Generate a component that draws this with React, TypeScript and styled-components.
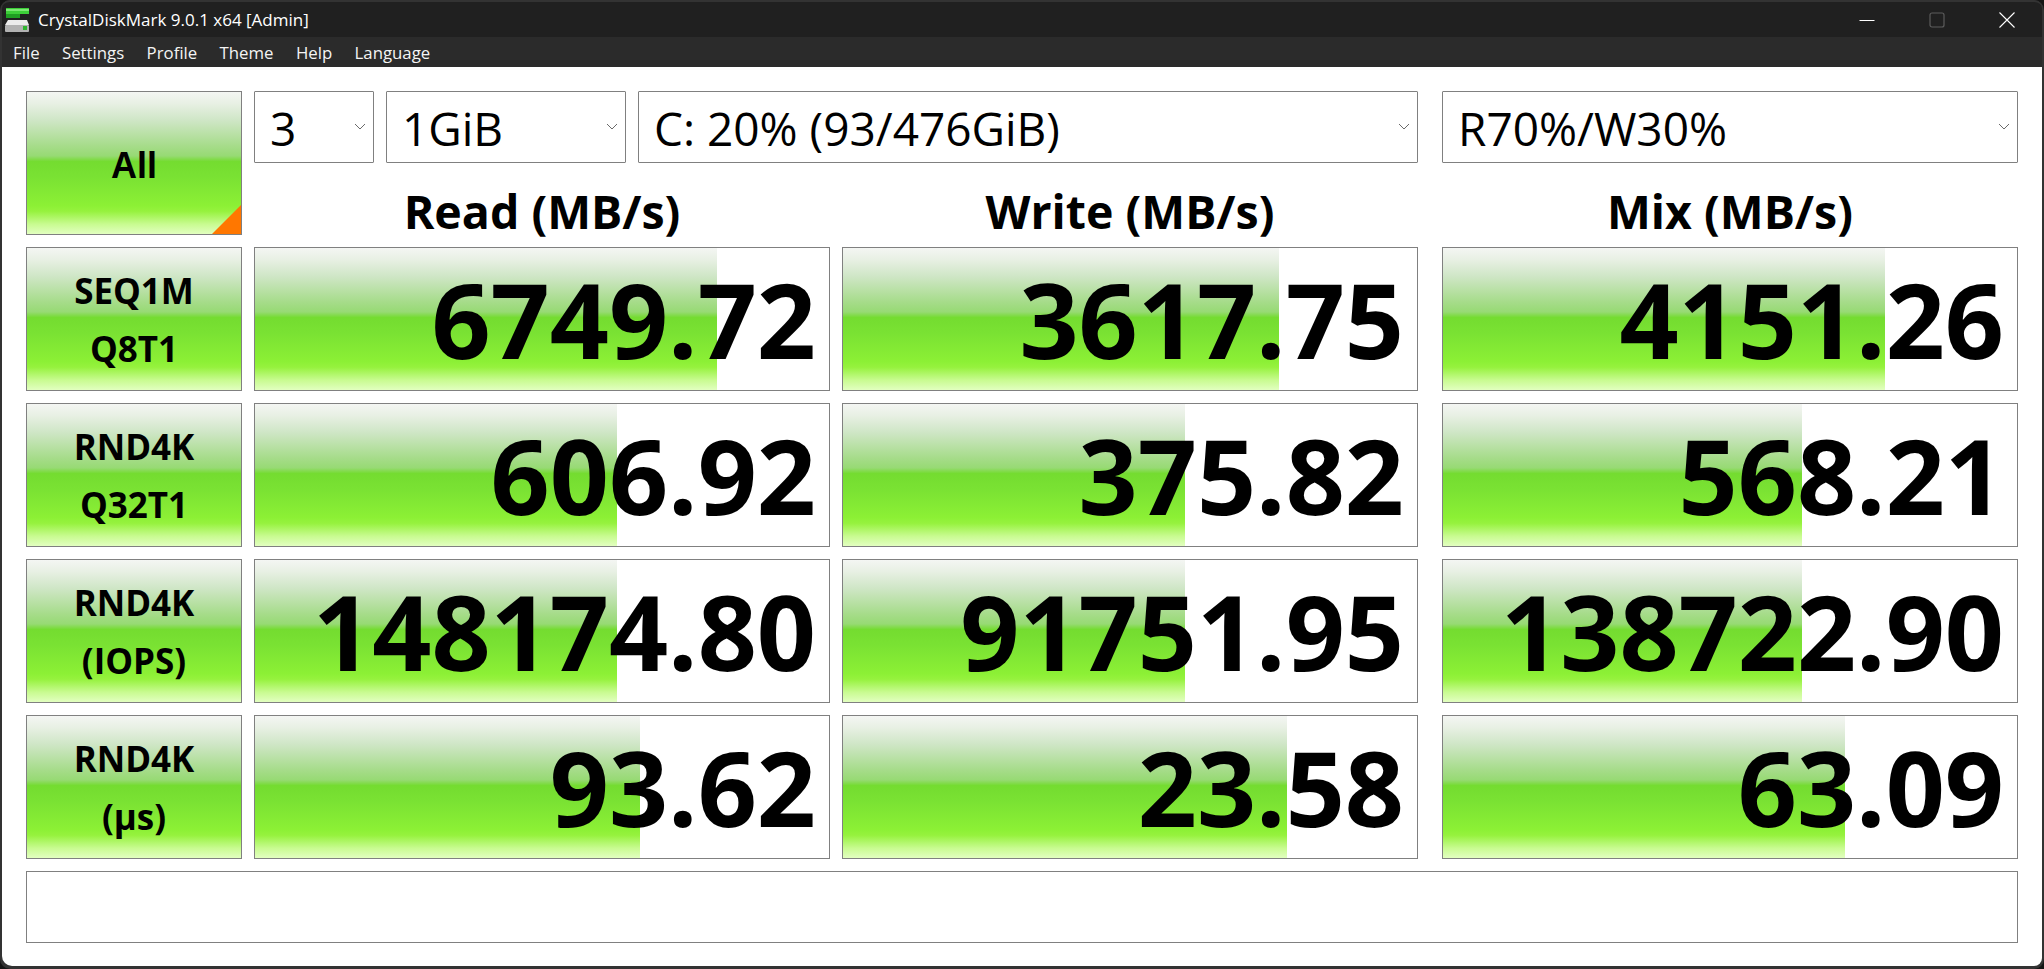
import React from "react";
import styled, { createGlobalStyle } from "styled-components";

const FONT = `"Open Sans", "Noto Sans", "Liberation Sans", sans-serif`;

const GlobalStyle = createGlobalStyle`
  html, body {
    margin: 0;
    height: 100%;
    background: #141414;
  }
  #root {
    height: 100%;
  }
`;

const menus = ["File", "Settings", "Profile", "Theme", "Help", "Language"];

const rows = [
  {
    top: "SEQ1M",
    bottom: "Q8T1",
    cells: [
      { value: "6749.72", fill: 462 },
      { value: "3617.75", fill: 436 },
      { value: "4151.26", fill: 442 },
    ],
  },
  {
    top: "RND4K",
    bottom: "Q32T1",
    cells: [
      { value: "606.92", fill: 362 },
      { value: "375.82", fill: 342 },
      { value: "568.21", fill: 359 },
    ],
  },
  {
    top: "RND4K",
    bottom: "(IOPS)",
    cells: [
      { value: "148174.80", fill: 362 },
      { value: "91751.95", fill: 342 },
      { value: "138722.90", fill: 359 },
    ],
  },
  {
    top: "RND4K",
    bottom: "(μs)",
    cells: [
      { value: "93.62", fill: 385 },
      { value: "23.58", fill: 444 },
      { value: "63.09", fill: 402 },
    ],
  },
];

const AppIcon = () => (
  <svg width="25" height="24" viewBox="0 0 25 24">
    <rect x="1" y="0" width="23" height="6" fill="#3ccf38" />
    <rect x="1" y="1" width="23" height="2" fill="#7ce874" />
    <rect x="1" y="6" width="14" height="4" fill="#1f9e22" />
    <path d="M3 12h19l2 5H0z" fill="#ececec" />
    <rect x="0" y="17" width="24" height="7" rx="1" fill="#b2b2b2" />
    <rect x="18" y="18" width="4" height="4" fill="#2fb52f" />
  </svg>
);

const Chevron = () => (
  <svg width="12" height="8" viewBox="0 0 12 8">
    <path d="M1 1l5 5 5-5" fill="none" stroke="#6a6a6a" strokeWidth="1" />
  </svg>
);

const App = () => {
  return (
    <Window>
      <GlobalStyle />
      <TitleBar>
        <TitleLeft>
          <AppIcon />
          <TitleText>CrystalDiskMark 9.0.1 x64 [Admin]</TitleText>
        </TitleLeft>
        <Controls>
          <ControlButton>
            <svg width="16" height="16" viewBox="0 0 16 16">
              <path d="M0.5 8.5h15" stroke="#fff" strokeWidth="1" />
            </svg>
          </ControlButton>
          <ControlButton>
            <svg width="16" height="16" viewBox="0 0 16 16">
              <rect x="1" y="1" width="14" height="14" rx="2" fill="none" stroke="#5c5c5c" strokeWidth="1.2" />
            </svg>
          </ControlButton>
          <ControlButton>
            <svg width="16" height="16" viewBox="0 0 16 16">
              <path d="M0.5 0.5l15 15M15.5 0.5l-15 15" stroke="#fff" strokeWidth="1.1" />
            </svg>
          </ControlButton>
        </Controls>
      </TitleBar>
      <MenuBar>
        {menus.map((m) => (
          <MenuItem key={m}>{m}</MenuItem>
        ))}
      </MenuBar>
      <Body>
        <TopRow>
          <AllButton>All</AllButton>
          <TopRight>
            <ComboRow>
              <Combo $width={120}>
                3
                <Chevron />
              </Combo>
              <Combo $width={240}>
                1GiB
                <Chevron />
              </Combo>
              <Combo $width={780}>
                C: 20% (93/476GiB)
                <Chevron />
              </Combo>
              <MixCombo $width={576}>
                R70%/W30%
                <Chevron />
              </MixCombo>
            </ComboRow>
            <HeadRow>
              <Heading>Read (MB/s)</Heading>
              <Heading>Write (MB/s)</Heading>
              <MixHeading>Mix (MB/s)</MixHeading>
            </HeadRow>
          </TopRight>
        </TopRow>
        {rows.map((row, i) => (
          <Row key={i}>
            <TestButton>
              <span>{row.top}</span>
              <span>{row.bottom}</span>
            </TestButton>
            {row.cells.map((cell, j) => {
              const Cell = j === 2 ? MixMeter : Meter;
              return (
                <Cell key={j} style={{ backgroundSize: `${cell.fill}px 100%` }}>
                  {cell.value}
                </Cell>
              );
            })}
          </Row>
        ))}
        <Comment />
      </Body>
    </Window>
  );
};

export default App;

const green = `linear-gradient(
  180deg,
  #f4f6f3 0%,
  #e8f0e4 8%,
  #cfe6c6 20%,
  #a6dc8a 38%,
  #97da74 45%,
  #74dc30 49%,
  #7ae233 60%,
  #8cf035 80%,
  #96f23e 84%,
  #c8fb90 93%,
  #e2ffc0 100%
)`;

const Window = styled.div`
  width: 2044px;
  height: 969px;
  box-sizing: border-box;
  padding: 0 2px 3px;
  display: flex;
  flex-direction: column;
  overflow: hidden;
  background: #333;
  border-radius: 10px;
  font-family: ${FONT};
`;

const TitleBar = styled.div`
  height: 37px;
  flex: none;
  display: flex;
  align-items: center;
  justify-content: space-between;
  padding-left: 3px;
  background: #202020;
  border-top: 2px solid #333;
  border-radius: 8px 8px 0 0;
  box-sizing: border-box;
`;

const TitleLeft = styled.div`
  display: flex;
  align-items: center;
  gap: 8px;
`;

const TitleText = styled.span`
  font-size: 17px;
  color: #fff;
`;

const Controls = styled.div`
  display: flex;
`;

const ControlButton = styled.div`
  width: 70px;
  height: 35px;
  display: flex;
  align-items: center;
  justify-content: center;
`;

const MenuBar = styled.div`
  height: 30px;
  flex: none;
  display: flex;
  align-items: center;
  gap: 22.4px;
  padding-left: 11px;
  background: #2b2b2b;
`;

const MenuItem = styled.span`
  font-size: 16.8px;
  color: #f4f4f4;
`;

const Body = styled.div`
  flex: 1;
  background: #fff;
  border-radius: 0 0 8px 10px;
  padding: 24px 24px 0;
  display: flex;
  flex-direction: column;
  gap: 12px;
`;

const TopRow = styled.div`
  display: flex;
  gap: 12px;
  height: 144px;
`;

const GreenBox = styled.div`
  box-sizing: border-box;
  border: 1px solid #808080;
  background: ${green};
  color: #000;
`;

const AllButton = styled(GreenBox)`
  position: relative;
  width: 216px;
  padding-top: 6px;
  display: flex;
  align-items: center;
  justify-content: center;
  font-family: "Liberation Sans", sans-serif;
  font-weight: 700;
  font-size: 36px;

  &::after {
    content: "";
    position: absolute;
    right: 0;
    bottom: 0;
    width: 29px;
    height: 29px;
    background: #ff7700;
    clip-path: polygon(100% 0, 100% 100%, 0 100%);
  }
`;

const TopRight = styled.div`
  flex: 1;
  display: flex;
  flex-direction: column;
`;

const ComboRow = styled.div`
  display: flex;
  gap: 12px;
  height: 72px;
`;

const Combo = styled.div<{ $width: number }>`
  box-sizing: border-box;
  width: ${(p) => p.$width}px;
  border: 1px solid #808080;
  border-radius: 1px;
  padding: 2px 7px 0 15px;
  display: flex;
  align-items: center;
  justify-content: space-between;
  font-size: 46px;
  color: #000;

  svg {
    flex: none;
    margin-top: -2px;
  }
`;

const MixCombo = styled(Combo)`
  margin-left: 12px;
`;

const HeadRow = styled.div`
  flex: 1;
  display: flex;
  gap: 12px;
`;

const Heading = styled.div`
  width: 576px;
  text-align: center;
  font-weight: 700;
  font-size: 46.5px;
  line-height: 32px;
  padding-top: 32px;
  color: #000;
`;

const MixHeading = styled(Heading)`
  margin-left: 12px;
`;

const Row = styled.div`
  display: flex;
  gap: 12px;
  height: 144px;
`;

const TestButton = styled(GreenBox)`
  width: 216px;
  padding-top: 2px;
  display: flex;
  flex-direction: column;
  align-items: center;
  justify-content: center;
  gap: 10px;
  font-weight: 700;
  font-size: 35px;
  line-height: 48px;
`;

const Meter = styled(GreenBox)`
  width: 576px;
  padding-right: 13px;
  background-color: #fff;
  background-repeat: no-repeat;
  text-align: right;
  font-weight: 700;
  font-size: 103.5px;
  line-height: 142px;
`;

const MixMeter = styled(Meter)`
  margin-left: 12px;
`;

const Comment = styled.div`
  box-sizing: border-box;
  height: 72px;
  border: 1px solid #808080;
`;
